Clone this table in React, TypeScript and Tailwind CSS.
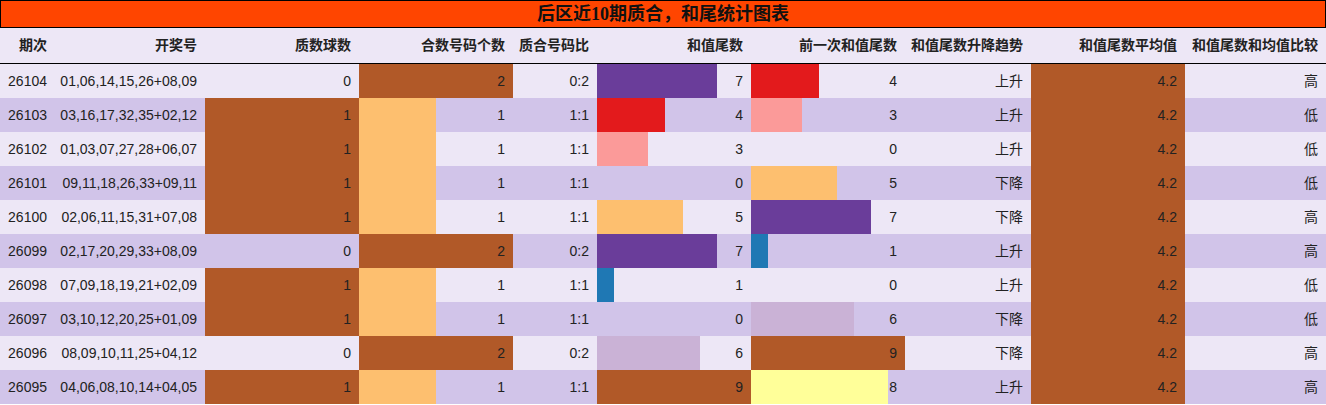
type Row = [string, string, number, number, string, number, number, string, number, string]

const rows: Row[] = [
	['26104', '01,06,14,15,26+08,09', 0, 2, '0:2', 7, 4, '上升', 4.2, '高'],
	['26103', '03,16,17,32,35+02,12', 1, 1, '1:1', 4, 3, '上升', 4.2, '低'],
	['26102', '01,03,07,27,28+06,07', 1, 1, '1:1', 3, 0, '上升', 4.2, '低'],
	['26101', '09,11,18,26,33+09,11', 1, 1, '1:1', 0, 5, '下降', 4.2, '低'],
	['26100', '02,06,11,15,31+07,08', 1, 1, '1:1', 5, 7, '下降', 4.2, '高'],
	['26099', '02,17,20,29,33+08,09', 0, 2, '0:2', 7, 1, '上升', 4.2, '高'],
	['26098', '07,09,18,19,21+02,09', 1, 1, '1:1', 1, 0, '上升', 4.2, '低'],
	['26097', '03,10,12,20,25+01,09', 1, 1, '1:1', 0, 6, '下降', 4.2, '低'],
	['26096', '08,09,10,11,25+04,12', 0, 2, '0:2', 6, 9, '下降', 4.2, '高'],
	['26095', '04,06,08,10,14+04,05', 1, 1, '1:1', 9, 8, '上升', 4.2, '高'],
]

const headers = [
	'期次',
	'开奖号',
	'质数球数',
	'合数号码个数',
	'质合号码比',
	'和值尾数',
	'前一次和值尾数',
	'和值尾数升降趋势',
	'和值尾数平均值',
	'和值尾数和均值比较',
]

const cols = 'grid grid-cols-[55px_150px_154px_154px_84px_154px_154px_126px_154px_1fr]'

const tailColors: Record<number, string> = {
	1: '#1f78b4',
	3: '#fb9a99',
	4: '#e31a1c',
	5: '#fdbf6f',
	6: '#cab2d6',
	7: '#6a3d9a',
	8: '#ffff99',
	9: '#b15928',
}

function Cell({ children }: { children: React.ReactNode }) {
	return <div className="flex items-center justify-end pr-2">{children}</div>
}

function BarCell({ value, max, color, label }: { value: number; max: number; color?: string; label?: string }) {
	return (
		<div className="relative flex items-center justify-end pr-2">
			{value > 0 && color && (
				<div className="absolute inset-y-0 left-0" style={{ width: `${(value / max) * 100}%`, background: color }} />
			)}
			<span className="relative">{label ?? value}</span>
		</div>
	)
}

export default function App() {
	return (
		<div className="w-[1326px] bg-white text-[14px] text-[#222]" style={{ fontFamily: '"Liberation Sans", "Noto Sans CJK SC", sans-serif' }}>
			<div
				className="flex h-[28px] items-center justify-center border border-black bg-[#ff4500] text-[18px] font-bold text-[#111]"
				style={{ fontFamily: '"Liberation Serif", "Noto Sans CJK SC", serif' }}
			>
				后区近10期质合，和尾统计图表
			</div>
			<div className={`${cols} h-[36px] border-b border-black bg-[#ede7f6] font-bold`}>
				{headers.map((h) => (
					<Cell key={h}>{h}</Cell>
				))}
			</div>
			{rows.map((r, i) => (
				<div key={r[0]} className={`${cols} h-[34px] ${i % 2 === 0 ? 'bg-[#ede7f6]' : 'bg-[#d1c4e9]'}`}>
					<Cell>{r[0]}</Cell>
					<Cell>{r[1]}</Cell>
					<BarCell value={r[2]} max={1} color="#b15928" />
					<BarCell value={r[3]} max={2} color={r[3] === 2 ? '#b15928' : '#fdbf6f'} />
					<Cell>{r[4]}</Cell>
					<BarCell value={r[5]} max={9} color={tailColors[r[5]]} />
					<BarCell value={r[6]} max={9} color={tailColors[r[6]]} />
					<Cell>{r[7]}</Cell>
					<BarCell value={r[8]} max={4.2} color="#b15928" label={r[8].toFixed(1)} />
					<Cell>{r[9]}</Cell>
				</div>
			))}
		</div>
	)
}
